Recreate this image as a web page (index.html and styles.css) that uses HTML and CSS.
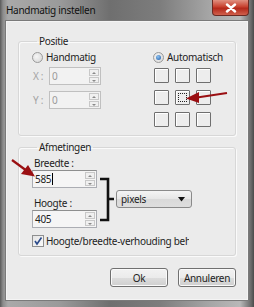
FILE: index.html
```html
<!DOCTYPE html>
<html>
<head>
<meta charset="utf-8">
<link rel="stylesheet" href="styles.css">
</head>
<body>
<div class="window">
  <div class="titlebar">
    <span class="title">Handmatig instellen</span>
    <div class="close">
      <svg width="12" height="10" viewBox="0 0 12 10"><path d="M2 1.5 L10 8.5 M10 1.5 L2 8.5" stroke="#fff" stroke-width="2.4" stroke-linecap="round"/></svg>
    </div>
  </div>
  <div class="client">
    <fieldset class="group positie">
      <legend>Positie</legend>
      <div class="pos-grid">
        <div class="col-left">
          <label class="radio"><span class="rbtn"></span>Handmatig</label>
          <div class="coord"><span class="dis">X :</span><div class="spin dis-input"><span class="val">0</span><span class="arrows"><i class="up"></i><i class="down"></i></span></div></div>
          <div class="coord"><span class="dis">Y :</span><div class="spin dis-input"><span class="val">0</span><span class="arrows"><i class="up"></i><i class="down"></i></span></div></div>
        </div>
        <div class="col-right">
          <label class="radio"><span class="rbtn checked"></span>Automatisch</label>
          <div class="anchors">
            <span class="sq"></span><span class="sq"></span><span class="sq"></span>
            <span class="sq"></span><span class="sq focus"></span><span class="sq"></span>
            <span class="sq"></span><span class="sq"></span><span class="sq"></span>
          </div>
        </div>
      </div>
    </fieldset>
    <fieldset class="group afm">
      <legend>Afmetingen</legend>
      <div class="afm-row">
        <div class="fields">
          <div class="lbl">Breedte :</div>
          <div class="spin wide"><span class="val">585<span class="caret"></span></span><span class="arrows"><i class="up"></i><i class="down"></i></span></div>
          <div class="lbl lbl2">Hoogte :</div>
          <div class="spin wide"><span class="val">405</span><span class="arrows"><i class="up"></i><i class="down"></i></span></div>
        </div>
        <div class="select"><span>pixels</span><svg width="7" height="5" viewBox="0 0 7 5"><path d="M0 0 H7 L3.5 4.5 Z" fill="#111"/></svg></div>
      </div>
      <label class="check"><span class="cbox"><svg width="10" height="10" viewBox="0 0 10 10"><path d="M2 5 L4 8 L8.5 1.5" stroke="#2a4a8a" stroke-width="1.6" fill="none"/></svg></span><span class="ctext">Hoogte/breedte-verhouding behouden</span></label>
    </fieldset>
    <div class="buttons">
      <button class="btn">Ok</button>
      <button class="btn">Annuleren</button>
    </div>
  </div>
  <svg class="bracket" width="18" height="46" viewBox="0 0 18 46"><path d="M1 2 H9 V43 H1 M9 22 H15" stroke="#111" stroke-width="2.6" fill="none"/></svg>
  <svg class="arrow a1" width="44" height="14" viewBox="0 0 44 14"><path d="M42 3 L12 7.5" stroke="#9a0f12" stroke-width="2.2"/><path d="M1 8.5 L14 2 L14 13 Z" fill="#9a0f12"/></svg>
  <svg class="arrow a2" width="26" height="20" viewBox="0 0 26 20"><path d="M1 1 L16 12" stroke="#9a0f12" stroke-width="2.2"/><path d="M24 17.5 L10 15 L17 6 Z" fill="#9a0f12"/></svg>
</div>
</body>
</html>
```
FILE: styles.css
```css
* { box-sizing: border-box; }
html, body { margin: 0; padding: 0; }
body {
  width: 254px;
  height: 307px;
  overflow: hidden;
  font-family: "Noto Sans", "Open Sans", sans-serif;
  font-size: 10px;
  letter-spacing: -0.3px;
  color: #1d1d1d;
}
.window {
  position: relative;
  width: 254px;
  height: 307px;
  padding: 0 6px 7px 6px;
  display: flex;
  flex-direction: column;
  background: linear-gradient(to right, #5a5a5a 0, #8c8c8c 3px, #a9a9a9 8px, #9a9a9a 60px, #6f6f6f 110px, #7d7d7d 160px, #a6a6a6 210px, #b8b8b8 240px, #6a6a6a 251px, #4a4a4a 254px);
}
.titlebar {
  height: 21px;
  display: flex;
  justify-content: space-between;
  align-items: flex-start;
  flex: none;
}
.title {
  margin-top: 3px;
  font-size: 10px;
  color: #111;
}
.close {
  width: 37px;
  height: 16px;
  margin-right: -1px;
  border: 1px solid #6b2a22;
  border-top: none;
  border-radius: 0 0 4px 4px;
  background: linear-gradient(#e09080, #c8412f 45%, #b3281a 55%, #d0604c);
  display: flex;
  align-items: center;
  justify-content: center;
}
.client {
  flex: 1;
  background: #ebebeb;
  border: 1px solid #f4f4f4;
  box-shadow: 0 0 0 1px #7a7a7a;
  padding: 12px 11px 0 11px;
  display: flex;
  flex-direction: column;
}
.group {
  margin: 0;
  border: 1px solid #d7d7d7;
  border-radius: 3px;
  box-shadow: inset 1px 1px 0 #fafafa, 1px 1px 0 #fafafa;
  padding: 0;
}
.group legend {
  padding: 0 2px;
  margin-left: 5px;
  line-height: 14px;
}
.positie {
  height: 102px;
  padding: 2px 12px 0 13px;
}
.pos-grid {
  display: flex;
  justify-content: space-between;
}
.col-left { width: 70px; }
.col-right { width: 69px; margin-right: 1px; }
.radio {
  display: flex;
  align-items: center;
  height: 14px;
  white-space: nowrap;
}
.rbtn {
  width: 11px;
  height: 11px;
  border-radius: 50%;
  border: 1px solid #9a9a9a;
  background: radial-gradient(circle at 40% 40%, #f6f6f6, #d4d4d4);
  margin-right: 3px;
  flex: none;
  display: flex;
  align-items: center;
  justify-content: center;
}
.rbtn.checked::after {
  content: "";
  width: 5px;
  height: 5px;
  border-radius: 50%;
  background: radial-gradient(circle at 40% 35%, #8fc3f0, #1c5aa8);
}
.coord {
  display: flex;
  align-items: center;
  height: 18px;
  margin-top: 3px;
}
.coord + .coord { margin-top: 6px; }
.dis {
  color: #a3a3a3;
  width: 17px;
  padding-left: 1px;
  flex: none;
}
.spin {
  display: flex;
  align-items: stretch;
  height: 18px;
  border: 1px solid #abadb3;
  border-top-color: #8e8f8f;
  background: #f5f5f5;
}
.dis-input { width: 52px; background: #f2f2f2; border-color: #c0c0c0; }
.spin .val {
  flex: 1;
  padding-left: 2px;
  line-height: 16px;
  display: flex;
  align-items: center;
}
.dis-input .val { color: #9a9a9a; }
.arrows {
  width: 11px;
  display: flex;
  flex-direction: column;
  gap: 1px;
  padding: 1px 1px 1px 0;
}
.arrows i {
  flex: 1;
  border: 1px solid #c8c8c8;
  background: #f0f0f0;
  position: relative;
}
.arrows i::after {
  content: "";
  position: absolute;
  left: 2px;
  top: 2px;
  border-left: 2px solid transparent;
  border-right: 2px solid transparent;
}
.arrows .up::after { border-bottom: 2px solid #8a8a8a; }
.arrows .down::after { border-top: 2px solid #8a8a8a; }
.anchors {
  display: grid;
  grid-template-columns: repeat(3, 15px);
  grid-auto-rows: 15px;
  column-gap: 6px;
  row-gap: 7px;
  margin-top: 4px;
  margin-left: 1px;
}
.sq {
  border: 1px solid #6f6f6f;
  background: #ededed;
  box-shadow: inset 1px 1px 0 #fff;
  border-radius: 1px;
}
.sq.focus {
  outline: 1px dotted #222;
  outline-offset: -4px;
}
.afm {
  margin-top: 4px;
  height: 116px;
  padding: 2px 12px 0 13px;
}
.afm-row {
  display: flex;
  align-items: flex-start;
}
.fields { width: 65px; }
.lbl { line-height: 14px; padding-left: 2px; }
.lbl2 { margin-top: 8px; }
.wide { width: 65px; height: 18px; }
.caret {
  display: inline-block;
  width: 1px;
  height: 12px;
  background: #000;
  margin-left: 1px;
}
.select {
  margin-left: 19px;
  margin-top: 34px;
  width: 76px;
  height: 18px;
  border: 1px solid #8a8a8a;
  border-radius: 3px;
  background: linear-gradient(#f4f4f4, #e6e6e6 50%, #d9d9d9 51%, #dedede);
  display: flex;
  align-items: center;
  justify-content: space-between;
  padding: 0 6px 0 4px;
}
.check {
  display: flex;
  align-items: center;
  height: 14px;
  margin-top: 6px;
  white-space: nowrap;
}
.cbox {
  width: 12px;
  height: 12px;
  border: 1px solid #8e8f8f;
  background: linear-gradient(135deg, #e4e4e4, #fafafa);
  margin-right: 2px;
  flex: none;
  display: flex;
  align-items: center;
  justify-content: center;
}
.ctext {
  width: 143px;
  overflow: hidden;
}
.buttons {
  display: flex;
  justify-content: flex-end;
  gap: 10px;
  margin-top: 12px;
}
.btn {
  width: 58px;
  height: 19px;
  padding: 0;
  font-family: inherit;
  font-size: 10px;
  letter-spacing: -0.3px;
  color: #1d1d1d;
  border: 1px solid #707070;
  border-radius: 3px;
  background: linear-gradient(#f2f2f2, #ebebeb 50%, #dddddd 51%, #cfcfcf);
  box-shadow: inset 0 0 0 1px #fafafa;
}
.bracket { position: absolute; left: 99px; top: 177px; }
.arrow { position: absolute; }
.a1 { left: 185px; top: 90px; }
.a2 { left: 11px; top: 159px; }
```
